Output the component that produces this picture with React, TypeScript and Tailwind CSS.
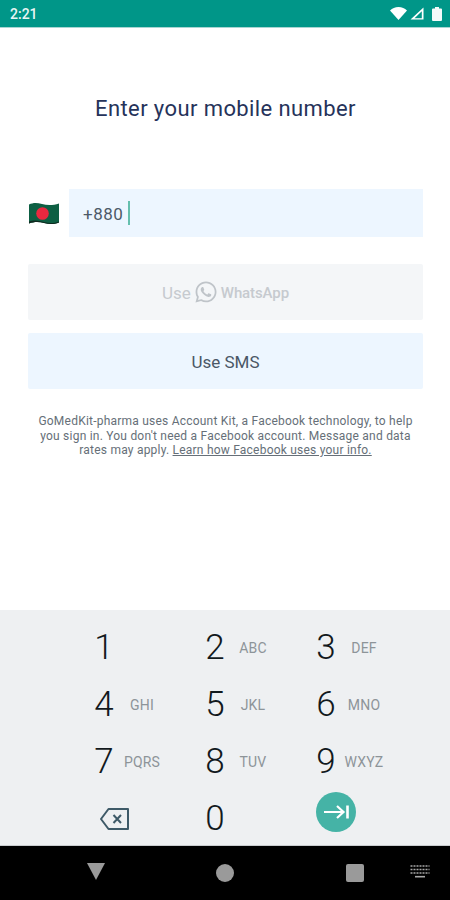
import React from "react";
import { FaWhatsapp } from "react-icons/fa";

const keys: [string, string][] = [
  ["1", ""], ["2", "ABC"], ["3", "DEF"],
  ["4", "GHI"], ["5", "JKL"], ["6", "MNO"],
  ["7", "PQRS"], ["8", "TUV"], ["9", "WXYZ"],
];

function Key({ d, l }: { d: string; l: string }) {
  return (
    <div className="flex items-center h-[57px]">
      <span className="w-10 text-center text-[35px] leading-none font-light text-[#12191d]">{d}</span>
      <span className="w-9 flex justify-center whitespace-nowrap text-[14px] leading-none text-[#8d9499] tracking-[0.2px]">{l}</span>
    </div>
  );
}

export default function App() {
  return (
    <div className="w-[450px] h-[900px] flex flex-col bg-white font-['Roboto',sans-serif] overflow-hidden">
      <div className="h-[28px] shrink-0 bg-[#009688] border-b border-[#a9d5d2] flex items-center justify-between pl-[10px] pr-[8px]">
        <span className="text-[14px] font-medium text-[#e9f5f4] leading-none">2:21</span>
        <div className="flex items-center gap-[3px]">
          <svg width="17" height="13" viewBox="0 0 17 13"><path d="M0 3.5C2.2 1.3 5.2 0 8.5 0s6.3 1.3 8.5 3.5L8.5 13z" fill="#fff" /></svg>
          <svg width="14" height="13" viewBox="0 0 14 13"><path d="M13.5 0.5V12.5H0.5zM11.8 4.2L4.5 11.2H11.8z" fill="#fff" fillRule="evenodd" /></svg>
          <svg className="ml-[5px]" width="10" height="14" viewBox="0 0 10 14"><path d="M3 0h4v1.5h2a1 1 0 0 1 1 1V13a1 1 0 0 1-1 1H1a1 1 0 0 1-1-1V2.5a1 1 0 0 1 1-1h2z" fill="#f4fafa" /></svg>
        </div>
      </div>

      <div className="flex-1 flex flex-col pl-[28px] pr-[27px]">
        <h1 className="mt-[67px] text-center text-[22px] leading-[28px] font-normal text-[#26335a] tracking-[0.4px]">Enter your mobile number</h1>

        <div className="mt-[66px] flex items-center h-12">
          <svg className="ml-px" width="30" height="23" viewBox="0 0 30 23">
            <path d="M0 2.5C4 0.5 8 0.5 13 2S24 3.5 30 1.5V20.5C25 22.5 20 22.5 15 21S5 19.5 0 21.5z" fill="#0d5f43" />
            <path d="M0 19.5C5 18 10 18.5 15 20S25 21.5 30 19.5V20.5C25 22.5 20 22.5 15 21S5 19.5 0 21.5z" fill="#10291f" />
            <circle cx="13.5" cy="11.5" r="6.3" fill="#e8283f" />
          </svg>
          <div className="ml-[10px] flex-1 h-12 bg-[#edf6ff] flex items-center pl-[14px]">
            <span className="pt-[2px] text-[17px] leading-none text-[#4c5a68] tracking-[0.5px]">+880</span>
            <span className="ml-[5px] w-[2px] h-6 bg-[#65bfae]"></span>
          </div>
        </div>

        <div className="mt-[27px] h-14 rounded-[2px] bg-[#f4f6f8] flex items-center justify-center text-[#c6cacf]">
          <span className="pt-[2px] text-[17px] leading-none">Use</span>
          <FaWhatsapp className="mx-[3px] text-[#bfc4c9]" size={24} />
          <span className="pt-[2px] text-[15px] leading-none font-medium tracking-[-0.1px]">WhatsApp</span>
        </div>

        <div className="mt-[13px] h-14 rounded-[2px] bg-[#edf6ff] flex items-center justify-center">
          <span className="pt-[2px] text-[17px] leading-none text-[#4a5766]">Use SMS</span>
        </div>

        <p className="mt-[25px] text-center text-[12px] leading-[14.5px] text-[#666f78] tracking-[0.22px] px-[8px]">
          GoMedKit-pharma uses Account Kit, a Facebook technology, to help you sign in. You don't need a Facebook account. Message and data rates may apply. <span className="underline">Learn how Facebook uses your info.</span>
        </p>
      </div>

      <div className="h-[236px] shrink-0 bg-[#eef0f2] border-b border-[#c9cccf] pt-[9px] pl-[84px]">
        <div className="grid grid-cols-[repeat(3,111px)]">
          {keys.map(([d, l]) => <Key key={d} d={d} l={l} />)}
          <div className="flex items-center h-[57px]">
            <svg className="ml-[15px]" width="31" height="24" viewBox="0 0 31 24" fill="none" stroke="#3e5a68" strokeWidth="2">
              <path d="M9.5 2H29V22H9.5L2 12z" strokeLinejoin="round" />
              <path d="M14.5 8L22 16M22 8L14.5 16" />
            </svg>
          </div>
          <Key d="0" l="" />
          <div className="flex items-start h-[57px]">
            <div className="ml-[10px] mt-[1.5px] w-10 h-10 rounded-full bg-[#45b3a6] flex items-center justify-center">
              <svg width="26" height="16" viewBox="0 0 26 16" fill="none" stroke="#fff" strokeWidth="2.2">
                <path d="M1 8H20M14 2l6.5 6-6.5 6" />
                <path d="M24.5 1.5V14.5" strokeWidth="2.6" />
              </svg>
            </div>
          </div>
        </div>
      </div>

      <div className="h-[54px] shrink-0 bg-black relative flex items-center">
        <svg className="absolute left-[86px] top-[17px]" width="20" height="17" viewBox="0 0 20 17"><path d="M1 0H19L10 17z" fill="#9a9a9a" /></svg>
        <div className="absolute left-[216px] top-[18px] w-[18px] h-[18px] rounded-full bg-[#9a9a9a]"></div>
        <div className="absolute left-[346px] top-[18px] w-[18px] h-[18px] rounded-[2px] bg-[#9a9a9a]"></div>
        <svg className="absolute left-[410px] top-[19px]" width="20" height="13" viewBox="0 0 20 13" fill="none" stroke="#a8a8a8" strokeWidth="1.4" strokeDasharray="2 1">
          <path d="M0.5 1H19.5M0.5 4.5H19.5M0.5 8H19.5" />
          <path d="M5 11.7H15" strokeDasharray="none" strokeWidth="1.6" />
        </svg>
      </div>
    </div>
  );
}
